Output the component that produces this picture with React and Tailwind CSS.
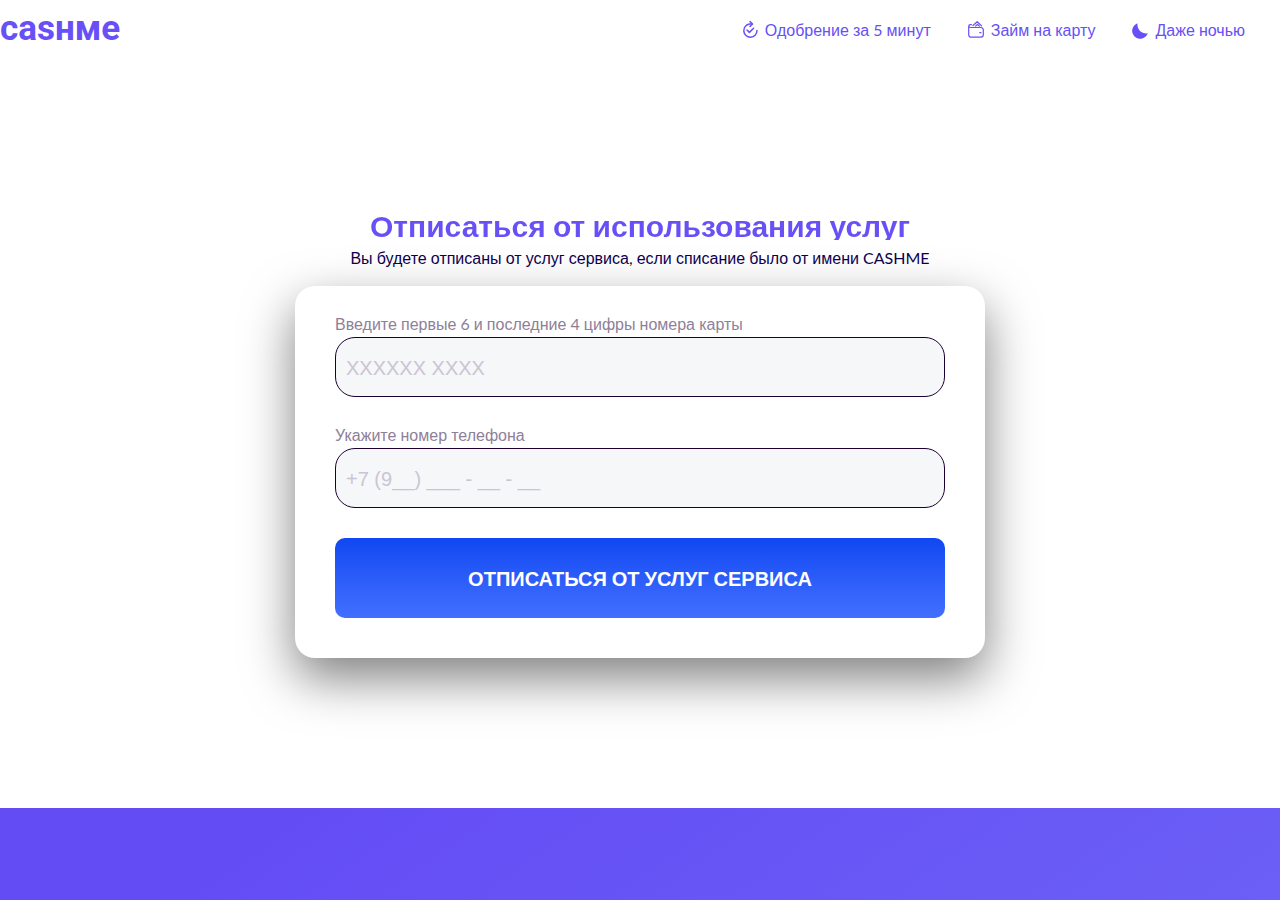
import React, { useState } from "react";

const ApproveIcon = () => (
  <svg width="18" height="20" viewBox="0 0 18 20" fill="none" aria-hidden="true">
    <path
      d="M11 4H8.6A6.6 6.6 0 1 0 16 10.6"
      stroke="currentColor"
      strokeWidth="1.5"
      strokeLinecap="round"
    />
    <path
      d="M9 1.5L11.5 4 9 6.5M6 10l2.4 2.4 4.2-4.2"
      stroke="currentColor"
      strokeWidth="1.5"
      strokeLinecap="round"
      strokeLinejoin="round"
    />
  </svg>
);

const WalletIcon = () => (
  <svg width="18" height="20" viewBox="0 0 18 20" fill="none" aria-hidden="true">
    <path
      d="M1.7 6v8.8a2.4 2.4 0 0 0 2.4 2.4h9.8a2.4 2.4 0 0 0 2.4-2.4V9.9a2.4 2.4 0 0 0-2.4-2.4H3.2a1.4 1.4 0 0 1 0-2.8h1.2M12.7 12.7h1.2"
      stroke="currentColor"
      strokeWidth="1.2"
      strokeLinecap="round"
    />
    <path
      d="M6 5.5l4.2-3.8 4.4 4.2M8.700 6l1.800-1.600 1.800 1.600"
      stroke="currentColor"
      strokeWidth="1.2"
      strokeLinecap="round"
      strokeLinejoin="round"
    />
  </svg>
);

const MoonIcon = () => (
  <svg width="18" height="20" viewBox="0 0 18 20" fill="none" aria-hidden="true">
    <path
      d="M6.6 3.2A8 8 0 1 0 16.8 13.2A8.6 8.6 0 0 1 6.6 3.2Z"
      fill="currentColor"
    />
  </svg>
);

// Lato is used for latin, digits and spaces, cyrillic words are set in Liberation Sans
const Text = ({ children }) =>
  children.split(/([а-яё]+)/i).map((part, i) =>
    i % 2 ? (
      <span key={i} className="font-['Liberation_Sans',sans-serif] leading-[0]">
        {part}
      </span>
    ) : (
      part
    )
  );

const features = [
  { text: "Одобрение за 5 минут", icon: <ApproveIcon /> },
  { text: "Займ на карту", icon: <WalletIcon /> },
  { text: "Даже ночью", icon: <MoonIcon /> },
];

const inputClass =
  "block w-full h-[60px] px-2.5 pt-0.5 rounded-[20px] border border-[#1d0033] bg-[#f6f7f9] font-['Liberation_Sans',sans-serif] text-xl text-[#1d0033] placeholder:text-[#cbc5d3] focus:outline-none";

const App = () => {
  const [form, setForm] = useState({ card: "", phone: "" });

  const onChange = (e) => {
    setForm((prev) => ({ ...prev, [e.target.name]: e.target.value }));
  };

  const submitHandler = (e) => {
    e.preventDefault();
  };

  return (
    <div className="min-h-screen flex flex-col bg-white font-['Lato','Liberation_Sans',sans-serif] text-base leading-4">
      <header className="flex items-center justify-between h-[60px] pr-[35px] text-[#6650f6]">
        <a
          href="/"
          className="pb-0.5 font-['Roboto',sans-serif] font-bold text-[35px] leading-9"
        >
          casнмe
        </a>
        <ul className="flex items-center gap-9">
          {features.map((item) => (
            <li key={item.text} className="flex items-center gap-1.5">
              {item.icon}
              <span>
                <Text>{item.text}</Text>
              </span>
            </li>
          ))}
        </ul>
      </header>

      <main className="px-4 py-[150px]">
        <h1 className="mx-auto w-fit text-center text-[30px] leading-[30px] font-bold text-transparent bg-clip-text bg-[#6650f6]">
          <Text>Отписаться от использования услуг</Text>
        </h1>
        <p className="mt-2.5 mb-5 text-center text-[#0d0050]">
          <Text>
            Вы будете отписаны от услуг сервиса, если списание было от имени
            CASHME
          </Text>
        </p>

        <form
          onSubmit={submitHandler}
          className="mx-auto max-w-[690px] px-10 pt-[30px] pb-10 rounded-[20px] bg-white shadow-[0_20px_50px_rgba(0,0,0,0.5)]"
        >
          <div className="mb-[30px]">
            <label htmlFor="card_field" className="block mb-[5px] text-[#8e8099]">
              <Text>Введите первые 6 и последние 4 цифры номера карты</Text>
            </label>
            <input
              type="text"
              id="card_field"
              name="card"
              className={inputClass}
              placeholder="XXXXXX XXXX"
              value={form.card}
              onChange={onChange}
            />
          </div>
          <div className="mb-[30px]">
            <label htmlFor="phone_field" className="block mb-[5px] text-[#8e8099]">
              <Text>Укажите номер телефона</Text>
            </label>
            <input
              type="tel"
              id="phone_field"
              name="phone"
              className={inputClass}
              placeholder="+7 (9__) ___ - __ - __"
              value={form.phone}
              onChange={onChange}
            />
          </div>
          <button
            type="submit"
            className="block w-full h-20 rounded-[10px] bg-linear-to-b from-[#1047f2] to-[#426fff] text-xl font-bold uppercase text-white"
          >
            <Text>Отписаться от услуг сервиса</Text>
          </button>
        </form>
      </main>

      <footer className="grow bg-[linear-gradient(145deg,#644cf5_20%,#6b5ff6_100%)]"></footer>
    </div>
  );
};

export default App;
